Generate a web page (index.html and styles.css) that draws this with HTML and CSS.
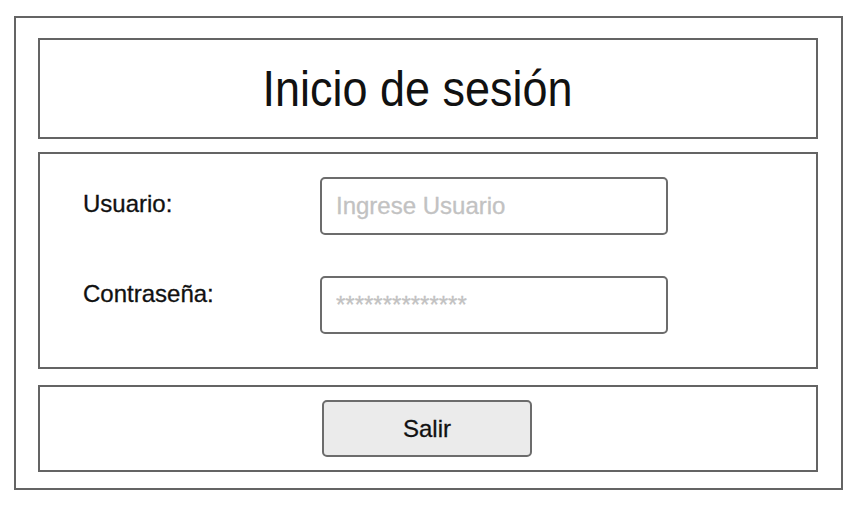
FILE: index.html
```html
<!DOCTYPE html>
<html lang="es">
<head>
<meta charset="utf-8">
<title>Inicio de sesión</title>
<link rel="stylesheet" href="styles.css">
</head>
<body>
<div class="frame">
  <div class="panel header">
    <h1 class="title">Inicio de sesión</h1>
  </div>
  <div class="panel body">
    <div class="labels">
      <label class="label" for="user">Usuario:</label>
      <label class="label" for="pass">Contraseña:</label>
    </div>
    <div class="fields">
      <input class="field" id="user" type="text" placeholder="Ingrese Usuario">
      <input class="field" id="pass" type="text" placeholder="**************">
    </div>
  </div>
  <div class="panel footer">
    <button class="btn" type="button">Salir</button>
  </div>
</div>
</body>
</html>
```

FILE: styles.css
```css
* { box-sizing: border-box; }

html, body {
  margin: 0;
  padding: 0;
  background: #ffffff;
}

body {
  font-family: "Liberation Sans", Arial, sans-serif;
  color: #111111;
}

.frame {
  margin: 16px 0 0 14px;
  width: 829px;
  height: 474px;
  border: 2px solid #646464;
  padding: 20px 23px 0 22px;
  display: flex;
  flex-direction: column;
}

.panel {
  border: 2px solid #646464;
}

.header {
  height: 101px;
  display: flex;
  align-items: center;
  justify-content: center;
  padding-right: 21px;
}

.title {
  margin: 0;
  font-size: 45px;
  font-weight: normal;
  line-height: 1;
  transform: scaleY(1.1);
}

.body {
  margin-top: 13px;
  height: 217px;
  display: flex;
  padding-left: 43px;
}

.labels {
  width: 237px;
  padding-top: 38px;
  display: flex;
  flex-direction: column;
  gap: 66px;
}

.label {
  font-size: 24px;
  line-height: 24px;
  color: #111111;
  -webkit-text-stroke: 0.3px #111111;
}

.fields {
  padding-top: 23px;
  display: flex;
  flex-direction: column;
  gap: 41px;
}

.field {
  width: 348px;
  height: 58px;
  border: 2px solid #6c6c6c;
  border-radius: 5px;
  padding: 0 14px;
  font-family: "Liberation Sans", Arial, sans-serif;
  font-size: 24px;
  line-height: 24px;
  color: #111111;
  background: #ffffff;
  outline: none;
}

.field::placeholder {
  color: #c2c2c2;
  opacity: 1;
  -webkit-text-stroke: 0.3px #c2c2c2;
}

.footer {
  margin-top: 16px;
  height: 87px;
  display: flex;
  align-items: center;
  justify-content: center;
}

.btn {
  width: 210px;
  height: 57px;
  border: 2px solid #6c6c6c;
  border-radius: 5px;
  background: #ebebeb;
  font-family: "Liberation Sans", Arial, sans-serif;
  font-size: 24px;
  color: #111111;
  -webkit-text-stroke: 0.3px #111111;
  padding: 0;
  margin-left: -2px;
}
```
